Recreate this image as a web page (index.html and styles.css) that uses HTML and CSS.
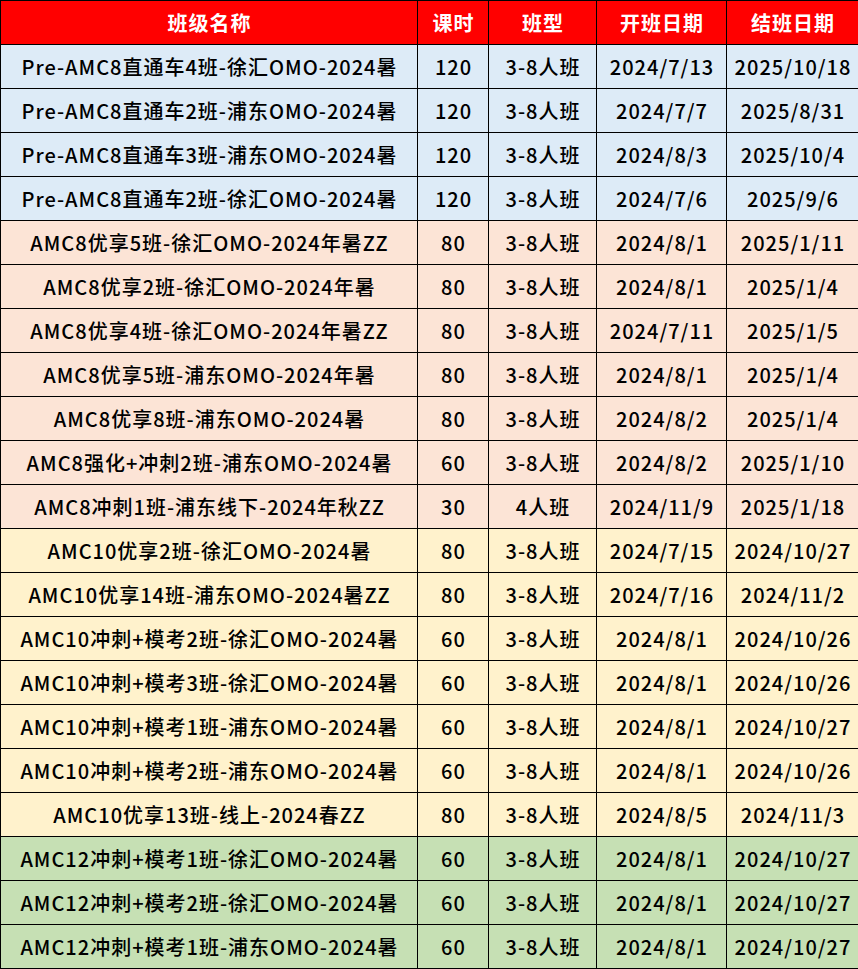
FILE: index.html
```html
<!DOCTYPE html>
<html lang="zh-CN">
<head>
<meta charset="utf-8">
<link rel="stylesheet" href="styles.css">
</head>
<body>
<table class="sched">
<colgroup>
<col class="c-name"><col class="c-hours"><col class="c-type"><col class="c-start"><col class="c-end">
</colgroup>
<thead>
<tr><th>班级名称</th><th>课时</th><th>班型</th><th>开班日期</th><th>结班日期</th></tr>
</thead>
<tbody>
<tr class="blue"><td>Pre-AMC8直通车4班-徐汇OMO-2024暑</td><td>120</td><td>3-8人班</td><td>2024/7/13</td><td>2025/10/18</td></tr>
<tr class="blue"><td>Pre-AMC8直通车2班-浦东OMO-2024暑</td><td>120</td><td>3-8人班</td><td>2024/7/7</td><td>2025/8/31</td></tr>
<tr class="blue"><td>Pre-AMC8直通车3班-浦东OMO-2024暑</td><td>120</td><td>3-8人班</td><td>2024/8/3</td><td>2025/10/4</td></tr>
<tr class="blue"><td>Pre-AMC8直通车2班-徐汇OMO-2024暑</td><td>120</td><td>3-8人班</td><td>2024/7/6</td><td>2025/9/6</td></tr>
<tr class="pink"><td>AMC8优享5班-徐汇OMO-2024年暑ZZ</td><td>80</td><td>3-8人班</td><td>2024/8/1</td><td>2025/1/11</td></tr>
<tr class="pink"><td>AMC8优享2班-徐汇OMO-2024年暑</td><td>80</td><td>3-8人班</td><td>2024/8/1</td><td>2025/1/4</td></tr>
<tr class="pink"><td>AMC8优享4班-徐汇OMO-2024年暑ZZ</td><td>80</td><td>3-8人班</td><td>2024/7/11</td><td>2025/1/5</td></tr>
<tr class="pink"><td>AMC8优享5班-浦东OMO-2024年暑</td><td>80</td><td>3-8人班</td><td>2024/8/1</td><td>2025/1/4</td></tr>
<tr class="pink"><td>AMC8优享8班-浦东OMO-2024暑</td><td>80</td><td>3-8人班</td><td>2024/8/2</td><td>2025/1/4</td></tr>
<tr class="pink"><td>AMC8强化+冲刺2班-浦东OMO-2024暑</td><td>60</td><td>3-8人班</td><td>2024/8/2</td><td>2025/1/10</td></tr>
<tr class="pink"><td>AMC8冲刺1班-浦东线下-2024年秋ZZ</td><td>30</td><td>4人班</td><td>2024/11/9</td><td>2025/1/18</td></tr>
<tr class="yellow"><td>AMC10优享2班-徐汇OMO-2024暑</td><td>80</td><td>3-8人班</td><td>2024/7/15</td><td>2024/10/27</td></tr>
<tr class="yellow"><td>AMC10优享14班-浦东OMO-2024暑ZZ</td><td>80</td><td>3-8人班</td><td>2024/7/16</td><td>2024/11/2</td></tr>
<tr class="yellow"><td>AMC10冲刺+模考2班-徐汇OMO-2024暑</td><td>60</td><td>3-8人班</td><td>2024/8/1</td><td>2024/10/26</td></tr>
<tr class="yellow"><td>AMC10冲刺+模考3班-徐汇OMO-2024暑</td><td>60</td><td>3-8人班</td><td>2024/8/1</td><td>2024/10/26</td></tr>
<tr class="yellow"><td>AMC10冲刺+模考1班-浦东OMO-2024暑</td><td>60</td><td>3-8人班</td><td>2024/8/1</td><td>2024/10/27</td></tr>
<tr class="yellow"><td>AMC10冲刺+模考2班-浦东OMO-2024暑</td><td>60</td><td>3-8人班</td><td>2024/8/1</td><td>2024/10/26</td></tr>
<tr class="yellow"><td>AMC10优享13班-线上-2024春ZZ</td><td>80</td><td>3-8人班</td><td>2024/8/5</td><td>2024/11/3</td></tr>
<tr class="green"><td>AMC12冲刺+模考1班-徐汇OMO-2024暑</td><td>60</td><td>3-8人班</td><td>2024/8/1</td><td>2024/10/27</td></tr>
<tr class="green"><td>AMC12冲刺+模考2班-徐汇OMO-2024暑</td><td>60</td><td>3-8人班</td><td>2024/8/1</td><td>2024/10/27</td></tr>
<tr class="green"><td>AMC12冲刺+模考1班-浦东OMO-2024暑</td><td>60</td><td>3-8人班</td><td>2024/8/1</td><td>2024/10/27</td></tr>
</tbody>
</table>
</body>
</html>
```

FILE: styles.css
```css
html, body {
  margin: 0;
  padding: 0;
  background: #ffffff;
}
.sched {
  border-collapse: collapse;
  table-layout: fixed;
  width: 858px;
  font-family: "Noto Sans CJK SC", "Noto Sans", sans-serif;
  font-size: 20px;
  letter-spacing: 1px;
  color: #000;
}
.c-name { width: 417px; }
.c-hours { width: 71px; }
.c-type { width: 108px; }
.c-start { width: 130px; }
.c-end { width: 132px; }
.sched th,
.sched td {
  border: 1px solid #000;
  height: 43px;
  padding: 0 0 0 1px;
  text-align: center;
  vertical-align: middle;
  white-space: nowrap;
  line-height: 24px;
}
.sched th {
  background: #ff0000;
  color: #ffffff;
  font-weight: 700;
}
.sched td {
  font-weight: 500;
}
.blue td { background: #ddebf7; }
.pink td { background: #fce4d6; }
.yellow td { background: #fff2cc; }
.green td { background: #c6e0b4; }
```
